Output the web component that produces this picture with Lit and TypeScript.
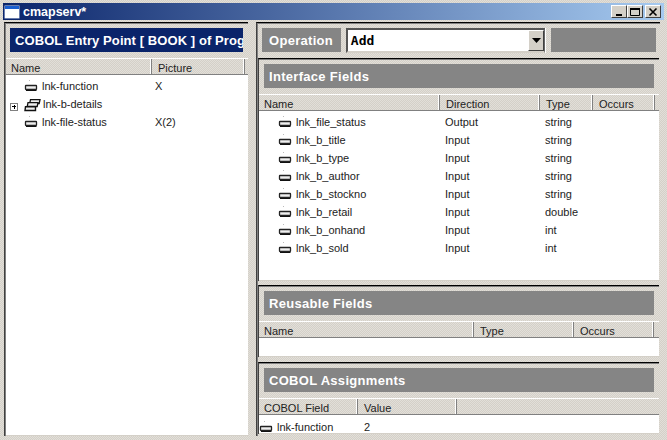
import { LitElement, html, css, svg } from "lit";
import { customElement } from "lit/decorators.js";

const fieldIcon = html`<svg class="ficon" width="18" height="12" viewBox="0 0 18 12"><rect x="1.5" y="5.5" width="11" height="4" rx=".5" fill="#eee" stroke="#222" stroke-width="1.3"/><path d="M2 10.5H12.5" fill="none" stroke="#111" stroke-width="1"/><rect x="5" y="0" width="1" height="1" fill="#bbb"/></svg>`;
const groupIcon = html`<svg class="ficon" width="17" height="13" viewBox="0 0 17 13">${svg`<path d="M6.5 .7H16L15.2 4.5H5.7Z" fill="#eee" stroke="#111" stroke-width="1.3"/><path d="M4 3.7H14L13.2 7.5H3.2Z" fill="#eee" stroke="#111" stroke-width="1.3"/><path d="M1.5 7.7H11.5V11.5H1Z" fill="#eee" stroke="#111" stroke-width="1.4"/>`}</svg>`;

interface Col { t: string; w: number }
const head = (cols: Col[]) => html`<div class="thead">${cols.map(c => html`<div class="th" style="width:${c.w}px">${c.t}</div>`)}<div class="fill"></div></div>`;

const ifaceRows = [
  ["lnk_file_status", "Output", "string"],
  ["lnk_b_title", "Input", "string"],
  ["lnk_b_type", "Input", "string"],
  ["lnk_b_author", "Input", "string"],
  ["lnk_b_stockno", "Input", "string"],
  ["lnk_b_retail", "Input", "double"],
  ["lnk_b_onhand", "Input", "int"],
  ["lnk_b_sold", "Input", "int"],
];

@customElement("app-root")
export class AppRoot extends LitElement {
  static styles = css`
    :host { display: block; width: 667px; height: 440px; overflow: hidden; font: 11px "Liberation Sans", Arial, sans-serif; color: #000; }
    * { box-sizing: border-box; }
    .win { width: 667px; height: 440px; padding: 3px 4px 4px 4px; display: flex; flex-direction: column;
      background: repeating-conic-gradient(#d4d0c8 0 25%, #e2dfd9 0 50%) 0 0/2px 2px; }
    .title { height: 17px; flex: none; margin: 0 -1px; display: flex; align-items: center; padding: 0 3px 0 2px; color: #fff;
      background: linear-gradient(90deg, #0a246a, #a6caf0); }
    .appicon { width: 14px; height: 12px; background: #fff; border-top: 3px solid #1a5fd0; box-shadow: 0 0 0 .5px #c8d4ee; margin-right: 4px; }
    .title .name { flex: 1; font: bold 12.5px "Liberation Sans", sans-serif; padding-top: 1px; }
    .wbtn { width: 16px; height: 13px; background: #d4d0c8; border: 1px solid; border-color: #fff #404040 #404040 #fff; display: flex; align-items: center; justify-content: center; }
    .wbtn.x { margin-left: 2px; }
    .body { flex: 1; display: flex; gap: 8px; margin-top: 2px; min-height: 0; }
    .left { width: 244px; flex: none; display: flex; flex-direction: column; border-top: 1px solid #000; border-left: 1px solid #404040; box-shadow: inset 1px 1px 0 #808080; padding: 1px 0 0 1px; }
    .navy { height: 24px; margin: 4px 5px 6px 4px; background: #0a246a; color: #fff; padding: 0 0 0 5px; display: flex; align-items: center; overflow: hidden; white-space: nowrap; font: bold 13px "Liberation Sans", sans-serif; letter-spacing: .08px; flex: none; }
    .thead { height: 17px; flex: none; display: flex; border-top: 1px solid #fff; border-bottom: 1px solid #808080; }
    .th { flex: none; padding: 3px 0 0 5px; border-right: 1px solid #808080; box-shadow: inset -1px 0 0 #fff; white-space: nowrap; color: #222; }
    .th + .th { padding-left: 6px; }
    .fill { flex: 1; }
    .tbody { flex: 1; background: #fff; min-height: 0; padding-top: 2px; border-bottom: 1px solid #d4d0c8; }
    .row { height: 18px; display: flex; align-items: center; white-space: nowrap; color: #222; }
    .cell { flex: none; padding-left: 3px; }
    .namecell { display: flex; align-items: center; }
    .ficon { flex: none; }
    .plus { width: 8px; height: 8px; border: 1px solid #808080; background: #fff; margin: 5px 6px 0 4px; position: relative; flex: none; }
    .plus::before { content: ""; position: absolute; left: 1px; right: 1px; top: 2.5px; height: 1px; background: #000; }
    .plus::after { content: ""; position: absolute; top: 1px; bottom: 1px; left: 2.5px; width: 1px; background: #000; }
    .group { margin: 2px 2px 0 0; display: flex; }
    .right { flex: 1; display: flex; flex-direction: column; min-width: 0; margin-right: 3px; border-left: 1px solid #404040; border-top: 1px solid #000; padding-left: 1px; box-shadow: inset 1px 1px 0 #808080; }
    .oprow { height: 35px; flex: none; display: flex; align-items: flex-start; padding: 5px 4px 0 4px; }
    .oplabel { width: 79px; height: 24px; background: #858585; color: #fff; font: bold 13px "Liberation Sans", sans-serif; padding-left: 7px; display: flex; align-items: center; letter-spacing: .3px; }
    .combo { width: 200px; height: 25px; margin-left: 5px; background: #fff; border: 2px solid; border-color: #555 #666 #d4d0c8 #555; border-right-width: 1px; display: flex; align-items: center; padding: 0 0 0 3px; font: bold 13px "DejaVu Sans Mono", monospace; box-shadow: 1px 0 0 #fff; }
    .combo .val { flex: 1; }
    .arrow { width: 16px; height: 21px; align-self: flex-start; background: #d4d0c8; border: 1px solid; border-color: #fff #404040 #404040 #fff; display: flex; align-items: center; justify-content: center; }
    .opgray { width: 105px; height: 24px; margin-left: 6px; background: #858585; }
    .panel { display: flex; flex-direction: column; border-top: 1px solid #000; border-left: 1px solid #404040; box-shadow: inset 0 1px 0 #808080; flex: none; margin: 0 1px 4px 0; }
    .gray { height: 24px; margin: 5px 5px 6px 5px; flex: none; background: #858585; color: #fff; font: bold 13px "Liberation Sans", sans-serif; padding-left: 5px; display: flex; align-items: center; letter-spacing: .3px; }
    .p1 { height: 223px; } .p2 { height: 72px; margin-bottom: 5px; } .p3 { flex: 1; margin-bottom: 2px; min-height: 0; }
    .p3 .tbody { padding-top: 3px; }
  `;

  render() {
    return html`<div class="win">
      <div class="title">
        <div class="appicon"></div><div class="name">cmapserv*</div>
        <div class="wbtn"><svg width="10" height="10"><rect x="2" y="7" width="6" height="2"/></svg></div>
        <div class="wbtn"><svg width="10" height="10"><path d="M.5 1.5H9.5V8.5H.5Z" fill="none" stroke="#000"/><rect y="1" width="10" height="2"/></svg></div>
        <div class="wbtn x"><svg width="10" height="10"><path d="M1.5 1.5L8.5 8.5M8.5 1.5L1.5 8.5" stroke="#000" stroke-width="1.6"/></svg></div>
      </div>
      <div class="body">
        <div class="left">
          <div class="navy">COBOL Entry Point [ BOOK ] of Prog</div>
          ${head([{ t: "Name", w: 146 }, { t: "Picture", w: 93 }])}
          <div class="tbody">
            <div class="row"><div class="cell namecell" style="width:146px;padding-left:18px">${fieldIcon}<span>lnk-function</span></div><div class="cell">X</div></div>
            <div class="row"><div class="cell namecell" style="width:146px;padding-left:0"><div class="plus"></div><span class="group">${groupIcon}</span><span>lnk-b-details</span></div></div>
            <div class="row"><div class="cell namecell" style="width:146px;padding-left:18px">${fieldIcon}<span>lnk-file-status</span></div><div class="cell">X(2)</div></div>
          </div>
        </div>
        <div class="right">
          <div class="oprow">
            <div class="oplabel">Operation</div>
            <div class="combo"><span class="val">Add</span><div class="arrow"><svg width="9" height="5"><path d="M0 0H9L4.5 5Z"/></svg></div></div>
            <div class="opgray"></div>
          </div>
          <div class="panel p1">
            <div class="gray">Interface Fields</div>
            ${head([{ t: "Name", w: 181 }, { t: "Direction", w: 100 }, { t: "Type", w: 53 }, { t: "Occurs", w: 62 }])}
            <div class="tbody">
              ${ifaceRows.map(r => html`<div class="row"><div class="cell namecell" style="width:181px;padding-left:19px">${fieldIcon}<span>${r[0]}</span></div><div class="cell" style="width:100px;padding-left:5px">${r[1]}</div><div class="cell" style="padding-left:5px">${r[2]}</div></div>`)}
            </div>
          </div>
          <div class="panel p2">
            <div class="gray">Reusable Fields</div>
            ${head([{ t: "Name", w: 215 }, { t: "Type", w: 100 }, { t: "Occurs", w: 80 }])}
            <div class="tbody"></div>
          </div>
          <div class="panel p3">
            <div class="gray">COBOL Assignments</div>
            ${head([{ t: "COBOL Field", w: 99 }, { t: "Value", w: 99 }])}
            <div class="tbody">
              <div class="row"><div class="cell namecell" style="width:99px;padding-left:0">${fieldIcon}<span>lnk-function</span></div><div class="cell" style="padding-left:6px">2</div></div>
            </div>
          </div>
        </div>
      </div>
    </div>`;
  }
}
